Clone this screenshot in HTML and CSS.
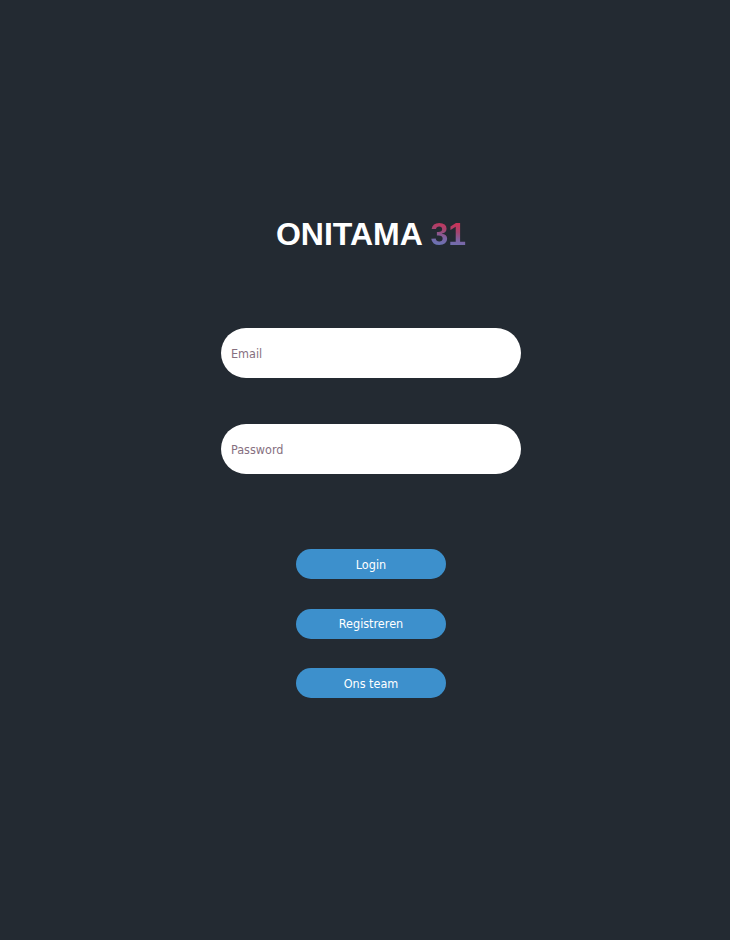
FILE: index.html
```html
<!DOCTYPE html>
<html lang="nl">
<head>
  <meta charset="UTF-8">
  <meta name="viewport" content="width=device-width, initial-scale=1.0">
  <title>Onitama 31</title>
  <link rel="stylesheet" href="styles.css">
</head>
<body>

<div id="loginPage">
  <h1 class="title">ONITAMA <span class="number">31</span></h1>

  <form class="loginForm" onsubmit="return false">
    <input type="email" id="email" placeholder="Email" />
    <input type="password" id="password" placeholder="Password" />
  </form>

  <div class="buttons">
    <button>Login</button>
    <button>Registreren</button>
    <button>Ons team</button>
  </div>
</div>

</body>
</html>
```

FILE: styles.css
```css
body {
  margin: 0;
  background-color: #232a32;
  font-family: 'DejaVu Sans Condensed', 'DejaVu Sans', Verdana, sans-serif;
  min-height: 100vh;
}

#loginPage {
  display: flex;
  flex-direction: column;
  align-items: center;
  padding-top: 216px;
  padding-left: 12px;
}

.title {
  margin: 0;
  font-family: 'Liberation Sans', Arial, sans-serif;
  font-size: 32px;
  line-height: 37px;
  font-weight: bold;
  color: #fff;
}

.number {
  background: linear-gradient(190deg, #cc3358 22%, #a4446f 42%, #7c64a4 62%, #6a74b4 80%);
  -webkit-background-clip: text;
  background-clip: text;
  color: transparent;
}

.loginForm {
  display: flex;
  flex-direction: column;
  gap: 46px;
  margin-top: 75px;
}

input {
  width: 300px;
  height: 50px;
  box-sizing: border-box;
  padding: 0 10px;
  border: none;
  border-radius: 25px;
  background-color: #fff;
  font-family: 'DejaVu Sans Condensed', 'DejaVu Sans', Verdana, sans-serif;
  font-size: 12.5px;
  outline: none;
}

input::placeholder {
  color: #86707f;
}

.buttons {
  display: flex;
  flex-direction: column;
  gap: 29.5px;
  margin-top: 75px;
}

button {
  width: 150px;
  height: 30px;
  border: none;
  border-radius: 15px;
  background-color: #3d90cc;
  color: #fff;
  font-family: 'DejaVu Sans Condensed', 'DejaVu Sans', Verdana, sans-serif;
  font-size: 12.5px;
  cursor: pointer;
}
```
